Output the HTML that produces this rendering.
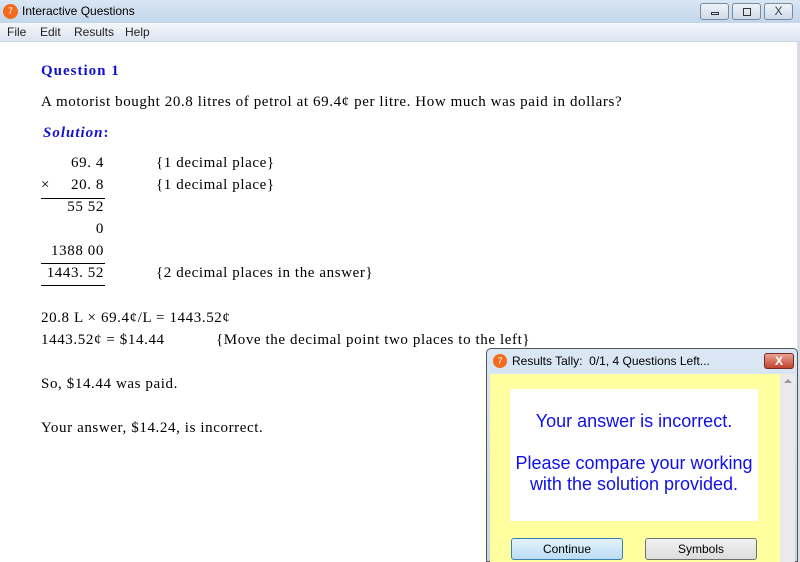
<!DOCTYPE html>
<html><head><style>
*{margin:0;padding:0;box-sizing:border-box}
body{width:800px;height:562px;overflow:hidden;background:#fff;position:relative;font-family:"Liberation Serif",serif;font-size:15px;letter-spacing:0.6px;color:#000}
.a{position:absolute;white-space:nowrap}
.s{font-family:"Liberation Sans",sans-serif;letter-spacing:0}
.r{text-align:right;width:80px}
.btn{position:absolute;border:1px solid #707070;border-radius:3px;font-family:"Liberation Sans",sans-serif;letter-spacing:0;font-size:12px;text-align:center;line-height:20px;background:linear-gradient(#f2f2f2,#dcdcdc)}
</style></head><body>
<div class="a" style="left:0;top:0;width:800px;height:23px;background:linear-gradient(#d9e6f3,#c4d6ea)"></div>
<div class="a s" style="left:3px;top:4px;width:15px;height:15px;border-radius:50%;background:#f26a1b;color:#fff;font-size:9px;text-align:center;line-height:15px">7</div>
<div class="a s" style="left:22px;top:4px;font-size:12px">Interactive Questions</div>
<div class="a" style="left:700px;top:3px;width:29px;height:17px;border:1px solid #7a8a9e;border-radius:3px;background:linear-gradient(#eef3f9,#cfdbe9)"><div style="position:absolute;left:10px;top:8px;width:8px;height:3px;border:1px solid #333"></div></div>
<div class="a" style="left:732px;top:3px;width:29px;height:17px;border:1px solid #7a8a9e;border-radius:3px;background:linear-gradient(#eef3f9,#cfdbe9)"><div style="position:absolute;left:10px;top:4px;width:8px;height:8px;border:1px solid #333"></div></div>
<div class="a s" style="left:764px;top:3px;width:29px;height:17px;border:1px solid #7a8a9e;border-radius:3px;background:linear-gradient(#eef3f9,#cfdbe9);text-align:center;font-size:12px;line-height:15px;color:#444">X</div>
<div class="a" style="left:0;top:23px;width:800px;height:19px;background:linear-gradient(#f4f7fb,#dce5f1);border-bottom:1px solid #c9d3e0"></div>
<div class="a s" style="left:7px;top:25px;font-size:12px;color:#222">File</div>
<div class="a s" style="left:40px;top:25px;font-size:12px;color:#222">Edit</div>
<div class="a s" style="left:74px;top:25px;font-size:12px;color:#222">Results</div>
<div class="a s" style="left:125px;top:25px;font-size:12px;color:#222">Help</div>
<div class="a" style="left:797px;top:42px;width:3px;height:520px;background:#d8dde5"></div>

<div class="a" style="left:41px;top:63px;color:#1010d0;font-weight:bold;letter-spacing:1px">Question 1</div>
<div class="a" style="left:41px;top:94px">A motorist bought 20.8 litres of petrol at 69.4¢ per litre. How much was paid in dollars?</div>
<div class="a" style="left:43px;top:125px;color:#1010d0;font-weight:bold;font-style:italic;letter-spacing:1px">Solution<span style="font-style:normal">:</span></div>
<div class="a r" style="left:24px;top:155px">69. 4</div>
<div class="a" style="left:41px;top:177px">×</div>
<div class="a r" style="left:24px;top:177px">20. 8</div>
<div class="a" style="left:41px;top:198px;width:64px;border-top:1px solid #000"></div>
<div class="a r" style="left:24px;top:199px">55 52</div>
<div class="a r" style="left:24px;top:221px">0</div>
<div class="a r" style="left:24px;top:243px">1388 00</div>
<div class="a" style="left:41px;top:263px;width:64px;border-top:1px solid #000"></div>
<div class="a r" style="left:24px;top:265px">1443. 52</div>
<div class="a" style="left:41px;top:285px;width:64px;border-top:1px solid #000"></div>
<div class="a" style="left:156px;top:155px">{1 decimal place}</div>
<div class="a" style="left:156px;top:177px">{1 decimal place}</div>
<div class="a" style="left:156px;top:265px">{2 decimal places in the answer}</div>
<div class="a" style="left:41px;top:310px">20.8 L × 69.4¢/L = 1443.52¢</div>
<div class="a" style="left:41px;top:332px">1443.52¢ = $14.44</div>
<div class="a" style="left:216px;top:332px">{Move the decimal point two places to the left}</div>
<div class="a" style="left:41px;top:376px">So, $14.44 was paid.</div>
<div class="a" style="left:41px;top:420px">Your answer, $14.24, is incorrect.</div>

<div class="a" style="left:486px;top:348px;width:312px;height:214px;border:1px solid #555;border-radius:5px 5px 0 0;background:linear-gradient(#dbe7f4,#c2d5ea)"></div>
<div class="a s" style="left:493px;top:354px;width:14px;height:14px;border-radius:50%;background:#f26a1b;color:#fff;font-size:9px;text-align:center;line-height:14px">7</div>
<div class="a s" style="left:512px;top:354px;font-size:12px">Results Tally:&nbsp; 0/1, 4 Questions Left...</div>
<div class="a s" style="left:764px;top:353px;width:30px;height:16px;border:1px solid #7a2a20;border-radius:3px;background:linear-gradient(#e8a294,#c0432d);color:#fff;font-weight:bold;font-size:12px;text-align:center;line-height:14px">X</div>
<div class="a" style="left:490px;top:374px;width:290px;height:188px;background:#ffff9f"></div>
<div class="a" style="left:780px;top:374px;width:15px;height:188px;background:#eaeaea"></div>
<div class="a" style="left:784px;top:379px;width:0;height:0;border-left:4px solid transparent;border-right:4px solid transparent;border-bottom:4px solid #999"></div>
<div class="a" style="left:510px;top:389px;width:248px;height:132px;background:#fff"></div>
<div class="a s" style="left:505px;top:411px;width:258px;text-align:center;color:#1010e8;font-size:18px;white-space:normal;line-height:21px">Your answer is incorrect.<br><br>Please compare your working<br>with the solution provided.</div>
<div class="btn" style="left:511px;top:538px;width:112px;height:22px;border-color:#3c7fb1;background:linear-gradient(#e4f3fc,#bcdcf3)">Continue</div>
<div class="btn" style="left:645px;top:538px;width:112px;height:22px">Symbols</div>
</body></html>
